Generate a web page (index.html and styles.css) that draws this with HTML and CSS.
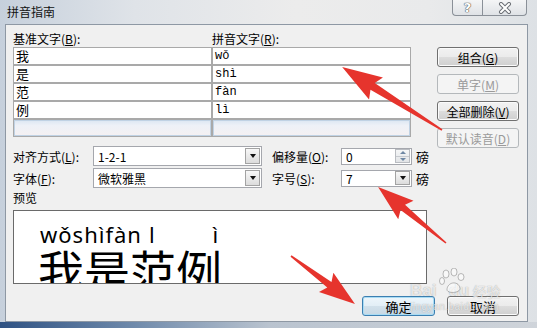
FILE: index.html
```html
<!DOCTYPE html>
<html lang="zh-CN">
    <head>
        <meta charset="UTF-8" />
        <meta name="viewport" content="width=device-width, initial-scale=1.0" />
        <title>拼音指南</title>
        <link rel="stylesheet" href="styles.css">
    </head>
    <body>
        <div class="dlg">
            <!-- 타이틀바 -->
            <div class="titlebar">
                <span class="title">拼音指南</span>
                <div class="caption">
                    <span class="cap_btn cap_help">?</span>
                    <span class="cap_btn cap_close">
                        <svg width="16" height="12" viewBox="0 0 16 12">
                            <path d="M4 2 L12 10 M12 2 L4 10" stroke="#6b6f75" stroke-width="4" stroke-linecap="round" />
                            <path d="M4 2 L12 10 M12 2 L4 10" stroke="#fff" stroke-width="2" stroke-linecap="round" />
                        </svg>
                    </span>
                </div>
            </div>

            <div class="client">
                <div class="left_col">
                    <div class="grid_labels">
                        <span>基准文字(<u>B</u>):</span>
                        <span>拼音文字(<u>R</u>):</span>
                    </div>
                    <div class="py_grid">
                        <div class="cell">我</div><div class="cell mono">wǒ</div>
                        <div class="cell">是</div><div class="cell mono">shì</div>
                        <div class="cell">范</div><div class="cell mono">fàn</div>
                        <div class="cell">例</div><div class="cell mono">lì</div>
                        <div class="cell empty"></div><div class="cell empty"></div>
                    </div>

                    <div class="options">
                        <span class="lbl">对齐方式(<u>L</u>):</span>
                        <div class="combo"><span>1-2-1</span><i class="drop"></i></div>
                        <span class="lbl lbl2">偏移量(<u>O</u>):</span>
                        <div class="spin"><span>0</span><i class="updown"><b class="up"></b><b class="down"></b></i></div>
                        <span class="unit">磅</span>

                        <span class="lbl">字体(<u>F</u>):</span>
                        <div class="combo"><span>微软雅黑</span><i class="drop"></i></div>
                        <span class="lbl lbl2">字号(<u>S</u>):</span>
                        <div class="spin"><span>7</span><i class="drop"></i></div>
                        <span class="unit">磅</span>
                    </div>

                    <div class="preview_label">预览</div>
                    <div class="preview">
                        <div class="py_line">
                            <span>wǒshìfàn</span><span class="py_l">l</span><span class="py_i">ì</span>
                        </div>
                        <div class="hz_line">我是范例</div>
                    </div>
                </div>

                <div class="side_btns">
                    <div class="btn">组合(<u>G</u>)</div>
                    <div class="btn dis">单字(<u>M</u>)</div>
                    <div class="btn">全部删除(<u>V</u>)</div>
                    <div class="btn dis">默认读音(<u>D</u>)</div>
                </div>

                <div class="footer">
                    <div class="btn ok">确定</div>
                    <div class="btn cancel">取消</div>
                </div>
            </div>

            <!-- 빨간 화살표 -->
            <svg class="arrows" width="537" height="328" viewBox="0 0 537 328">
                <g transform="translate(442 130) rotate(212.2)">
                    <polygon points="0,-0.8 82,-4 78,-13 118,0 78,13 82,4 0,0.8" fill="#e6342d" />
                </g>
                <g transform="translate(446 243) rotate(219.5)">
                    <polygon points="0,-0.8 56,-3.5 52,-12 88,0 52,12 56,3.5 0,0.8" fill="#e6342d" />
                </g>
                <g transform="translate(291 256) rotate(36.9)">
                    <polygon points="0,-0.8 48,-3.5 44,-12 80,0 44,12 48,3.5 0,0.8" fill="#e6342d" />
                </g>
            </svg>

            <!-- 워터마크 -->
            <div class="watermark">
                <div class="wm_row">
                    <span class="wm_bai">Bai</span>
                    <span class="wm_du">
                        <svg width="30" height="26" viewBox="0 0 30 26">
                            <ellipse cx="8" cy="6" rx="3" ry="4" />
                            <ellipse cx="16" cy="4" rx="3" ry="4" />
                            <ellipse cx="23" cy="9" rx="3" ry="3.5" />
                            <ellipse cx="4" cy="13" rx="2.5" ry="3.5" />
                            <path d="M9 22 C9 14 20 12 22 20 C23 25 10 26 9 22 Z" />
                        </svg>
                        du
                    </span>
                    <span class="wm_jy">经验</span>
                </div>
                <div class="wm_url">jingyan.baidu.com</div>
            </div>
        </div>
    </body>
</html>
```

FILE: styles.css
```css
* {
    margin: 0px;
    padding: 0px;
    box-sizing: border-box;
}

body {
    width: 537px;
    height: 328px;
    overflow: hidden;
    font-family: "Noto Sans CJK SC", sans-serif;
    font-size: 12px;
    color: #000;
}

u {
    text-decoration: underline;
}

.dlg {
    position: relative;
    width: 537px;
    height: 328px;
    padding: 0px 9px 6px 5px;
    display: flex;
    flex-direction: column;
    background:
        linear-gradient(90deg, #2f5283 0%, #6f8aab 25%, #b9c3cf 50%, #cfd4da 100%) bottom / 100% 6px no-repeat,
        linear-gradient(90deg, #c6d0dc 0%, #dfe3e8 25%, #ececec 55%, #e9eaeb 80%, #dde1e5 100%);
    overflow: hidden;
}

/* 타이틀바 */
.titlebar {
    height: 24px;
    display: flex;
    justify-content: space-between;
    align-items: flex-start;
}
.title {
    padding: 4px 0px 0px 2px;
    line-height: 16px;
    font-size: 12px;
    color: #111;
}
.caption {
    display: flex;
    margin-right: 1px;
}
.cap_btn {
    height: 16px;
    border: 1px solid #8a9098;
    border-top: none;
    background: linear-gradient(#f4f5f6, #dfe2e6);
    display: flex;
    align-items: center;
    justify-content: center;
}
.cap_help {
    width: 30px;
    border-radius: 0px 0px 0px 4px;
    border-right: none;
    font-family: "DejaVu Sans", sans-serif;
    font-size: 13px;
    font-weight: bold;
    color: #fff;
    text-shadow: 0 0 1px #555, 0 0 1px #555, 0 0 1px #555;
}
.cap_close {
    width: 45px;
    border-radius: 0px 0px 4px 0px;
}

/* 본문 */
.client {
    flex: 1;
    border: 1px solid #8e98a4;
    background-color: #f0f0f0;
    padding: 6px 8px 0px 7px;
    display: grid;
    grid-template-columns: 414px 82px;
    column-gap: 10px;
    align-content: start;
}

.grid_labels {
    width: 398px;
    display: grid;
    grid-template-columns: 199px 199px;
    line-height: 16px;
}

.py_grid {
    width: 398px;
    display: grid;
    grid-template-columns: 1fr 1fr;
    grid-auto-rows: 16px;
    gap: 2px;
    padding: 1px;
    background-color: #a9a9a9;
}
.cell {
    background-color: #fff;
    line-height: 16px;
    padding-left: 2px;
    font-size: 13px;
}
.cell.mono {
    font-family: "Liberation Mono", monospace;
    font-size: 12px;
}
.cell.empty {
    background: linear-gradient(#dbe6f2, #eef1f7 35%, #f4f0f2);
    box-shadow: inset 0 0 0 1px #c0d2e4;
}

/* 옵션 */
.options {
    margin-top: 9px;
    display: grid;
    grid-template-columns: 80px 169px 79px 71px 1fr;
    grid-template-rows: 20px 20px;
    row-gap: 2px;
    align-items: center;
}
.lbl2 {
    padding-left: 10px;
}
.unit {
    padding-left: 4px;
    font-size: 13px;
}
.combo,
.spin {
    background-color: #fff;
    border: 1px solid #a5a7ad;
    display: flex;
    align-items: center;
    justify-content: space-between;
    padding-left: 4px;
}
.combo {
    height: 20px;
}
.spin {
    height: 17px;
}
.drop {
    width: 15px;
    height: 16px;
    margin-right: 1px;
    border: 1px solid #a3a3a3;
    background: linear-gradient(#f8f8f8, #dcdcdc);
    display: flex;
    align-items: center;
    justify-content: center;
}
.spin .drop {
    height: 14px;
}
.drop::after {
    content: "";
    border-top: 4px solid #111;
    border-left: 3.5px solid transparent;
    border-right: 3.5px solid transparent;
}
.updown {
    width: 15px;
    height: 14px;
    margin-right: 1px;
    display: flex;
    flex-direction: column;
    border: 1px solid #b9bcc1;
    background: linear-gradient(#f5f6f7, #e2e4e7);
}
.updown b {
    flex: 1;
    display: flex;
    align-items: center;
    justify-content: center;
}
.updown .up {
    border-bottom: 1px solid #c6c9ce;
}
.up::after {
    content: "";
    border-bottom: 3px solid #6f87a3;
    border-left: 3px solid transparent;
    border-right: 3px solid transparent;
}
.down::after {
    content: "";
    border-top: 3px solid #6f87a3;
    border-left: 3px solid transparent;
    border-right: 3px solid transparent;
}

/* 미리보기 */
.preview_label {
    margin-top: 2px;
    line-height: 16px;
}
.preview {
    margin-top: 4px;
    height: 74px;
    border: 1px solid #6a6a6a;
    background-color: #fff;
    overflow: hidden;
    padding: 11px 0px 0px 24px;
}
.py_line {
    display: flex;
    height: 24px;
    line-height: 24px;
    font-family: "Noto Sans", sans-serif;
    font-size: 22px;
    padding-left: 2px;
}
.py_line span:first-child {
    letter-spacing: 1px;
}
.py_l {
    margin-left: 7px;
}
.py_i {
    margin-left: 58px;
}
.hz_line {
    line-height: 46px;
    font-size: 46px;
    letter-spacing: 0px;
}

/* 버튼 */
.side_btns {
    margin-top: 16px;
    display: flex;
    flex-direction: column;
    gap: 7px;
}
.btn {
    height: 20px;
    border: 1px solid #707070;
    border-radius: 3px;
    background: linear-gradient(#f2f2f2 0%, #ebebeb 50%, #dddddd 51%, #cfcfcf 100%);
    box-shadow: inset 0 0 0 1px #fbfbfb;
    display: flex;
    align-items: center;
    justify-content: center;
    font-size: 12px;
}
.btn.dis {
    border-color: #b4b8bb;
    background: #f4f4f4;
    box-shadow: none;
    color: #9a9a9a;
}
.footer {
    grid-column: 1 / -1;
    margin-top: 12px;
    display: flex;
    justify-content: flex-end;
    gap: 12px;
}
.footer .btn {
    font-size: 13px;
}
.ok {
    width: 73px;
    border-color: #3c7fb1;
    box-shadow: inset 0 0 0 1px #a9dcf4;
    background: linear-gradient(#eef6fb 0%, #e2eef6 50%, #d2e1eb 51%, #c7d8e4 100%);
}
.cancel {
    width: 72px;
}

/* 화살표 */
.arrows {
    position: absolute;
    left: 0px;
    top: 0px;
    pointer-events: none;
}

/* 워터마크 */
.watermark {
    position: absolute;
    left: 410px;
    top: 270px;
    color: rgba(255, 255, 255, 0.75);
    text-shadow: 0 0 1px rgba(90, 90, 90, 0.6);
    pointer-events: none;
}
.wm_row {
    display: flex;
    align-items: flex-end;
    height: 30px;
}
.wm_bai,
.wm_du {
    font-family: "Liberation Sans", sans-serif;
    font-size: 17px;
    font-weight: bold;
    line-height: 18px;
}
.wm_du {
    position: relative;
    width: 34px;
    padding-left: 12px;
}
.wm_du svg {
    position: absolute;
    left: 2px;
    top: -14px;
    fill: rgba(255, 255, 255, 0.55);
    stroke: rgba(120, 120, 120, 0.5);
    stroke-width: 1;
}
.wm_jy {
    font-size: 14px;
    line-height: 18px;
    margin-left: 2px;
}
.wm_url {
    font-family: "Liberation Sans", sans-serif;
    font-size: 10px;
    line-height: 14px;
    letter-spacing: 0.5px;
}
```
